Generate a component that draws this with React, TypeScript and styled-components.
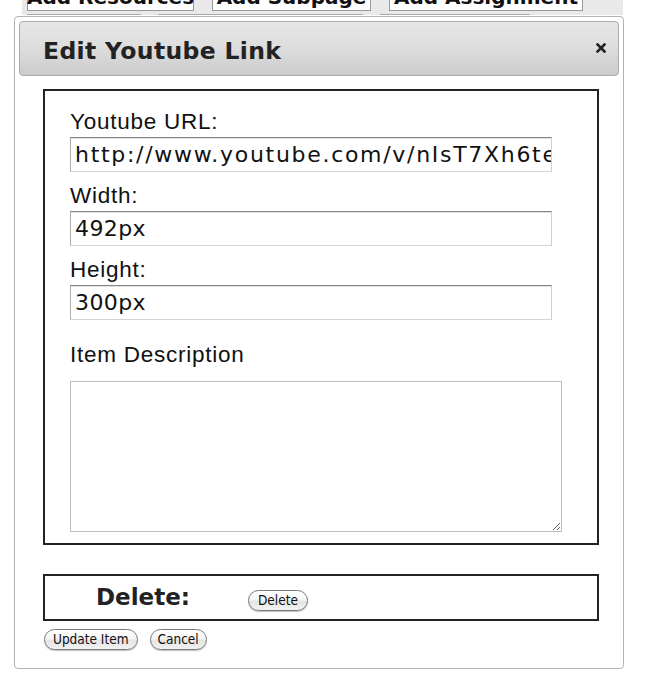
import React from "react";
import styled, { createGlobalStyle } from "styled-components";

const GlobalStyle = createGlobalStyle`
  html, body { margin: 0; padding: 0; background: #ffffff; }
  body { font-family: "Liberation Sans", Arial, sans-serif; color: #111; }
  * { box-sizing: border-box; }
`;

const Page = styled.div`
  width: 651px;
  height: 697px;
  display: flex;
  flex-direction: column;
  overflow: hidden;
`;

const BackStrip = styled.div`
  margin-left: 22px;
  width: 601px;
  height: 15px;
  background: #e9e9e9;
  display: flex;
  flex-direction: column;
  overflow: hidden;
`;

const TabRow = styled.div`
  height: 14px;
  display: flex;
  align-items: flex-end;
  gap: 18px;
  padding-left: 5px;
`;

const BackButton = styled.div<{ $w: number }>`
  width: ${(p) => p.$w}px;
  height: 29px;
  flex: none;
  margin-bottom: 3px;
  border: 1px solid #9a9a9a;
  background: #ffffff;
  display: flex;
  align-items: flex-end;
  justify-content: center;
  padding-bottom: 3px;
  font-family: "DejaVu Sans", Verdana, sans-serif;
  font-weight: bold;
  font-size: 20px;
  line-height: 20px;
  color: #111;
  white-space: nowrap;
`;

const RuleRow = styled.div`
  height: 1px;
  display: flex;
`;

const Rule = styled.div<{ $left: number; $w: number }>`
  margin-left: ${(p) => p.$left}px;
  width: ${(p) => p.$w}px;
  height: 1px;
  background: #a8a8a8;
`;

const Dialog = styled.div`
  margin: 1px 0 0 14px;
  width: 610px;
  height: 653px;
  border: 1px solid #b3b3b3;
  border-radius: 4px;
  background: #ffffff;
  display: flex;
  flex-direction: column;
`;

const TitleBar = styled.div`
  margin: 4px 4px 0 4px;
  height: 55px;
  border: 1px solid #acacac;
  border-radius: 4px;
  background: linear-gradient(to bottom, #e6e6e6 0%, #dedede 45%, #cbcbcb 100%);
  display: flex;
  align-items: center;
  justify-content: space-between;
  padding: 0 12px 0 23px;
`;

const Title = styled.h1`
  margin: 0;
  padding-top: 4px;
  font-family: "DejaVu Sans", Verdana, sans-serif;
  font-weight: bold;
  font-size: 23.5px;
  letter-spacing: 0.35px;
  color: #222;
`;

const CloseButton = styled.button`
  border: 0;
  padding: 0;
  background: none;
  width: 10px;
  height: 10px;
  display: flex;
  margin-bottom: 1px;
`;

const FormBox = styled.div`
  margin: 13px 0 0 28px;
  width: 556px;
  height: 456px;
  border: 2px solid #232323;
  padding: 17px 0 0 25px;
  display: flex;
  flex-direction: column;
`;

const Label = styled.label<{ $gapTop?: number }>`
  display: block;
  height: 28px;
  margin-top: ${(p) => p.$gapTop ?? 0}px;
  font-family: "Liberation Sans", Arial, sans-serif;
  font-size: 22.5px;
  line-height: 28px;
  letter-spacing: 0.75px;
  color: #111;
`;

const TextInput = styled.input<{ $spread?: number }>`
  display: block;
  width: 482px;
  height: 35px;
  margin: 1px 0 10px 0;
  padding: 0 0 0 4px;
  border: 1px solid;
  border-color: #858585 #cfcfcf #d4d4d4 #adadad;
  box-shadow: inset 0 1px 0 #e2e2e2;
  background: #ffffff;
  font-family: "DejaVu Sans", Verdana, sans-serif;
  font-size: 22px;
  letter-spacing: ${(p) => p.$spread ?? 0.4}px;
  color: #111;
  outline: none;
`;

const TextArea = styled.textarea`
  display: block;
  width: 492px;
  height: 151px;
  margin-top: 12px;
  border: 1px solid #bcbcbc;
  background: #ffffff;
  resize: both;
  outline: none;
  font-family: "DejaVu Sans", Verdana, sans-serif;
  font-size: 14px;
`;

const DeleteBox = styled.div`
  margin: 29px 0 0 28px;
  width: 556px;
  height: 47px;
  border: 2px solid #232323;
  display: grid;
  grid-template-columns: 203px auto;
  align-items: start;
`;

const DeleteLabel = styled.h3`
  margin: 0;
  padding: 7px 0 0 51px;
  font-family: "DejaVu Sans", Verdana, sans-serif;
  font-weight: bold;
  font-size: 23px;
  line-height: 28px;
  color: #222;
`;

const PillButton = styled.button<{ $pad?: number }>`
  height: 21px;
  padding: 0 ${(p) => p.$pad ?? 8}px;
  border: 1px solid #7a7a7a;
  border-radius: 11px;
  background: linear-gradient(to bottom, #ffffff 0%, #f6f6f6 45%, #e4e4e4 55%, #f2f2f2 100%);
  box-shadow: 0 1px 1px rgba(0, 0, 0, 0.25);
  font-family: "DejaVu Sans Condensed", "DejaVu Sans", sans-serif;
  font-size: 13.5px;
  line-height: 19px;
  color: #111;
  white-space: nowrap;
`;

const DeleteButtonSlot = styled.div`
  padding-top: 14px;
  display: flex;
`;

const ActionRow = styled.div`
  margin: 8px 0 0 29px;
  display: flex;
  gap: 12px;
`;

const CloseIcon = () => (
  <svg width="10" height="10" viewBox="0 0 10 10">
    <path d="M1.5 1.5 L8.5 8.5 M8.5 1.5 L1.5 8.5" stroke="#222" strokeWidth="2.6" strokeLinecap="square" />
  </svg>
);

export default function App() {
  return (
    <>
      <GlobalStyle />
      <Page>
        <BackStrip>
          <TabRow>
            <BackButton $w={167}>Add Resources</BackButton>
            <BackButton $w={159}>Add Subpage</BackButton>
            <BackButton $w={194}>Add Assignment</BackButton>
          </TabRow>
          <RuleRow>
            <Rule $left={5} $w={114} />
            <Rule $left={17} $w={205} />
            <Rule $left={17} $w={150} />
          </RuleRow>
        </BackStrip>
        <Dialog>
          <TitleBar>
            <Title>Edit Youtube Link</Title>
            <CloseButton aria-label="close">
              <CloseIcon />
            </CloseButton>
          </TitleBar>
          <FormBox>
            <Label>Youtube URL:</Label>
            <TextInput $spread={1.7} defaultValue="http://www.youtube.com/v/nIsT7Xh6te" />
            <Label>Width:</Label>
            <TextInput defaultValue="492px" />
            <Label>Height:</Label>
            <TextInput defaultValue="300px" />
            <Label $gapTop={11}>Item Description</Label>
            <TextArea />
          </FormBox>
          <DeleteBox>
            <DeleteLabel>Delete:</DeleteLabel>
            <DeleteButtonSlot>
              <PillButton $pad={9}>Delete</PillButton>
            </DeleteButtonSlot>
          </DeleteBox>
          <ActionRow>
            <PillButton $pad={8}>Update Item</PillButton>
            <PillButton $pad={7}>Cancel</PillButton>
          </ActionRow>
        </Dialog>
      </Page>
    </>
  );
}
